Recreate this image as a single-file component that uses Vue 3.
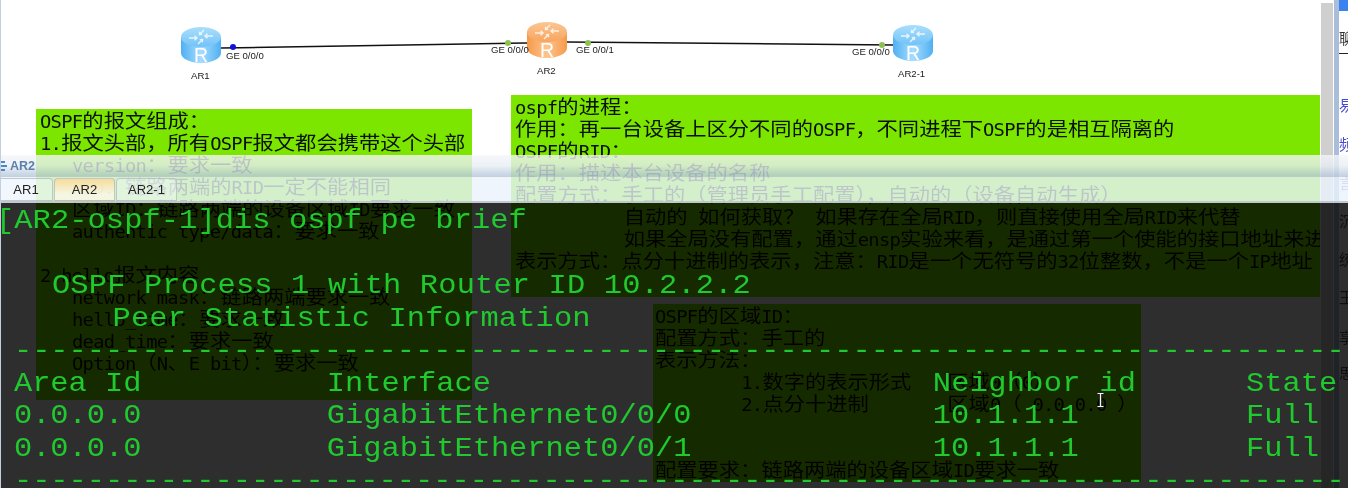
<script setup>
const routers = [
  { id: 'a', x: 181, y: 27, side1: '#4fb0f2', side2: '#a6dcff', top1: '#a9defc', top2: '#72c3f8' },
  { id: 'b', x: 527, y: 22, side1: '#f59a4a', side2: '#fdc48e', top1: '#fcc694', top2: '#f7a55e' },
  { id: 'c', x: 893, y: 25, side1: '#4fb0f2', side2: '#a6dcff', top1: '#a9defc', top2: '#72c3f8' }
]
const links = ['M221 48 L527 43', 'M567 42 L893 45']
const dots = [
  { x: 233, y: 47, c: '#1212d8' },
  { x: 508, y: 43, c: '#8cc152' },
  { x: 588, y: 43, c: '#8cc152' },
  { x: 882, y: 45, c: '#8cc152' }
]
const labels = [
  { x: 226, y: 59, t: 'GE 0/0/0' },
  { x: 491, y: 53, t: 'GE 0/0/0' },
  { x: 576, y: 53, t: 'GE 0/0/1' },
  { x: 852, y: 55, t: 'GE 0/0/0' },
  { x: 191, y: 79, t: 'AR1' },
  { x: 537, y: 74, t: 'AR2' },
  { x: 898, y: 77, t: 'AR2-1' }
]

const runs = (t) => (t.match(/[\x20-\x7e]+|[^\x20-\x7e]+/g) || []).map((s) => ({ s, lat: /^[\x20-\x7e]/.test(s) }))
const build = (arr) => arr.map(([i, t, w, t2]) => ({ i, a: runs(t), w, b: t2 ? runs(t2) : null }))

const note1 = build([
  [0, 'OSPF的报文组成：'],
  [0, '1.报文头部，所有OSPF报文都会携带这个头部'],
  [28.6, 'version：要求一致'],
  [28.6, 'RID：链路两端的RID一定不能相同'],
  [28.6, '区域ID：链路两端的设备区域ID要求一致'],
  [28.6, 'authentic type/data：要求一致'],
  [0, ''],
  [0, '2.hello报文内容'],
  [28.6, 'network mask：链路两端要求一致'],
  [28.6, 'hello_time：要求一致'],
  [28.6, 'dead_time：要求一致'],
  [28.6, 'Option（N、E bit）：要求一致']
])
const note2 = build([
  [0, 'ospf的进程：'],
  [0, '作用：再一台设备上区分不同的OSPF，不同进程下OSPF的是相互隔离的'],
  [0, 'OSPF的RID：'],
  [0, '作用：描述本台设备的名称'],
  [0, '配置方式：手工的（管理员手工配置），自动的（设备自动生成）'],
  [97, '自动的 如何获取？ 如果存在全局RID，则直接使用全局RID来代替'],
  [97, '如果全局没有配置，通过ensp实验来看，是通过第一个使能的接口地址来进'],
  [0, '表示方式：点分十进制的表示，注意：RID是一个无符号的32位整数，不是一个IP地址']
])
const note3 = build([
  [0, 'OSPF的区域ID：'],
  [0, '配置方式：手工的'],
  [0, '表示方法：'],
  [77, '1.数字的表示形式', 184, '区域0（0）'],
  [77, '2.点分十进制', 184, '区域0（ 0.0.0.0 ）'],
  [0, ''],
  [0, ''],
  [0, '配置要求：链路两端的设备区域ID要求一致']
])
const notes = [
  { cls: 'n1', lines: note1 },
  { cls: 'n2', lines: note2 },
  { cls: 'n3', lines: note3 }
]
const panelChars = [
  { y: 29, t: '聊', c: '#333' },
  { y: 96, t: '易', c: '#4a4ad0' },
  { y: 135, t: '频', c: '#4a4ad0' },
  { y: 174, t: '言', c: '#8a8ad0' },
  { y: 212, t: '沉', c: '#555' },
  { y: 250, t: '统', c: '#555' },
  { y: 288, t: '王', c: '#555' },
  { y: 328, t: '享', c: '#555' },
  { y: 364, t: '思', c: '#555' }
]
const dashes = '-'.repeat(74)
const tabs = [
  { t: 'AR1', w: 53 },
  { t: 'AR2', w: 61, on: true },
  { t: 'AR2-1', w: 61 }
]
const rows = [
  ['0.0.0.0', 'GigabitEthernet0/0/0', '10.1.1.1', 'Full'],
  ['0.0.0.0', 'GigabitEthernet0/0/1', '10.1.1.1', 'Full']
]
</script>

<template>
  <div class="stage">
    <svg class="topo" width="1320" height="95" viewBox="0 0 1320 95">
      <defs>
        <template v-for="r in routers" :key="r.id">
          <linearGradient :id="'s' + r.id" x1="0" x2="1" y1="0" y2="0">
            <stop offset="0" :stop-color="r.side1" />
            <stop offset="0.5" :stop-color="r.side2" />
            <stop offset="1" :stop-color="r.side1" />
          </linearGradient>
          <linearGradient :id="'t' + r.id" x1="0" x2="0" y1="0" y2="1">
            <stop offset="0" :stop-color="r.top1" />
            <stop offset="1" :stop-color="r.top2" />
          </linearGradient>
        </template>
      </defs>
      <path v-for="l in links" :key="l" :d="l" stroke="#111" stroke-width="1.5" fill="none" />
      <g v-for="r in routers" :key="r.id" :transform="`translate(${r.x} ${r.y})`">
        <path d="M0 10 V26 A20 10 0 0 0 40 26 V10 Z" :fill="`url(#s${r.id})`" />
        <ellipse cx="20" cy="10" rx="20" ry="10" :fill="`url(#t${r.id})`" />
        <g stroke="#fff" stroke-width="1.4" fill="none" opacity="0.8">
          <path d="M8 11 H16 M13.5 8.8 L16 11 L13.5 13.2" />
          <path d="M32 9 H24 M26.5 6.8 L24 9 L26.5 11.2" />
          <path d="M23 3 L18.5 7.5 M18.6 4.8 L18.5 7.5 L21.2 7.4" />
          <path d="M17 17 L21.5 12.5 M21.4 15.2 L21.5 12.5 L18.8 12.6" />
        </g>
        <text x="20" y="34.5" text-anchor="middle" class="r">R</text>
      </g>
      <circle v-for="d in dots" :key="d.x" :cx="d.x" :cy="d.y" r="3" :fill="d.c" />
      <text v-for="l in labels" :key="l.x" :x="l.x" :y="l.y" class="lbl">{{ l.t }}</text>
    </svg>

    <div v-for="n in notes" :key="n.cls" class="note" :class="n.cls">
      <div class="note-text">
        <div v-for="(ln, i) in n.lines" :key="i" class="nl" :style="{ paddingLeft: ln.i + 'px' }">
          <span class="part" :style="ln.w ? { width: ln.w + 'px' } : null">
            <span v-for="(r, k) in ln.a" :key="k" :class="{ lat: r.lat }">{{ r.s }}</span>
          </span>
          <span v-if="ln.b" class="part">
            <span v-for="(r, k) in ln.b" :key="k" :class="{ lat: r.lat }">{{ r.s }}</span>
          </span>
        </div>
      </div>
    </div>

    <div class="scroll"></div>
    <div class="panel">
      <div class="panel-top"></div>
      <div class="panel-rule"></div>
      <span v-for="c in panelChars" :key="c.y" class="pc" :style="{ top: c.y + 'px', color: c.c }">{{ c.t }}</span>
    </div>

    <div class="win">
      <div class="title">
        <svg width="8" height="14" viewBox="0 0 8 14" class="ticon">
          <path d="M0 3 H5 M0 7 H7 M0 11 H5" stroke="#4d86c2" stroke-width="2" fill="none" />
        </svg>
        <span class="ttext">AR2</span>
      </div>
      <div class="tabs">
        <div v-for="t in tabs" :key="t.t" class="tab" :class="{ on: t.on }" :style="{ width: t.w + 'px' }">{{ t.t }}</div>
      </div>
      <div class="term">
        <div class="term-text">
          <div class="tl cmd">[AR2-ospf-1]dis ospf pe brief</div>
          <div class="tl">&nbsp;</div>
          <div class="tl proc">OSPF Process 1 with Router ID 10.2.2.2</div>
          <div class="tl peer">Peer Statistic Information</div>
          <div class="tl dash">{{ dashes }}</div>
          <div class="tl grid"><span>Area Id</span><span>Interface</span><span class="wide">Neighbor id</span><span>State</span></div>
          <div v-for="(r, i) in rows" :key="i" class="tl grid">
            <span v-for="c in r" :key="c">{{ c }}</span>
          </div>
          <div class="tl dash">{{ dashes }}</div>
        </div>
      </div>
      <svg class="cursor" width="9" height="16" viewBox="0 0 9 16">
        <path d="M1 1 H8 M4.5 1 V15 M1 15 H8" stroke="#222" stroke-width="3" fill="none" />
        <path d="M1.5 1.5 H7.5 M4.5 1.5 V14.5 M1.5 14.5 H7.5" stroke="#f2f2f2" stroke-width="1.2" fill="none" />
      </svg>
    </div>
  </div>
</template>

<style scoped>
.stage {
  position: relative;
  width: 1348px;
  height: 488px;
  overflow: hidden;
  background: #fff;
  border-left: 1px solid #c3cfe0;
  box-sizing: border-box;
  filter: blur(0.5px);
  font-family: "Noto Sans CJK SC", "Liberation Sans", sans-serif;
}
.topo {
  position: absolute;
  left: -1px;
  top: 0;
}
.r {
  font: 19.5px "Liberation Sans", sans-serif;
  fill: #fff;
}
.lbl {
  font: 9.6px "Liberation Sans", sans-serif;
  fill: #222;
}
.note {
  position: absolute;
  background: #7ce600;
  overflow: hidden;
  color: #061000;
}
.n1 {
  left: 35px;
  top: 109px;
  width: 436px;
  height: 291px;
  padding-left: 4px;
  box-sizing: border-box;
}
.n2 {
  left: 510px;
  top: 95px;
  width: 809px;
  height: 202px;
  padding-left: 4px;
  box-sizing: border-box;
}
.n3 {
  left: 652px;
  top: 304px;
  width: 488px;
  height: 178px;
  padding-left: 2px;
  box-sizing: border-box;
}
.note-text {
  transform: scaleX(1.12);
  transform-origin: 0 0;
  white-space: pre;
  font-size: 19px;
}
.nl {
  height: 22px;
  line-height: 22px;
}
.part {
  display: inline-block;
}
.lat {
  font-family: "DejaVu Sans Mono", monospace;
  font-size: 16.8px;
  letter-spacing: -0.65px;
}
.scroll {
  position: absolute;
  left: 1320px;
  top: 3px;
  width: 12px;
  height: 485px;
  background: #cfcfcf;
}
.panel {
  position: absolute;
  left: 1333px;
  top: 0;
  width: 15px;
  height: 488px;
  background: #fff;
  border-left: 5px solid #a9bfd9;
  box-sizing: border-box;
  overflow: hidden;
}
.panel-top {
  height: 11px;
  background: #3b82f0;
}
.panel-rule {
  position: absolute;
  left: 0;
  right: 0;
  top: 53px;
  height: 1px;
  background: #222;
}
.pc {
  position: absolute;
  left: 0;
  font-size: 15px;
  line-height: 18px;
}
.win {
  position: absolute;
  left: -1px;
  top: 155px;
  width: 1348px;
  height: 333px;
  display: flex;
  flex-direction: column;
}
.title {
  height: 22px;
  display: flex;
  align-items: center;
  background: linear-gradient(rgba(244, 246, 248, 0.8), rgba(232, 238, 244, 0.8) 50%, rgba(186, 202, 220, 0.85));
  border-bottom: 1px solid rgba(150, 170, 190, 0.5);
  box-sizing: border-box;
}
.ticon {
  margin-left: 0;
}
.ttext {
  margin-left: 2px;
  font: bold 12.5px "Liberation Sans", sans-serif;
  color: #5c80aa;
}
.tabs {
  height: 26px;
  display: flex;
  align-items: flex-start;
  padding-top: 1px;
  gap: 1px;
  box-sizing: border-box;
  background: rgba(234, 243, 253, 0.8);
  border-bottom: 2px solid rgba(190, 196, 204, 0.9);
}
.tab {
  height: 23px;
  box-sizing: border-box;
  border: 1px solid rgba(170, 180, 190, 0.7);
  border-left: none;
  border-radius: 0 4px 0 0;
  background: rgba(250, 252, 255, 0.35);
  text-align: center;
  font: 13px/22px "Liberation Sans", sans-serif;
  color: #222;
}
.tab + .tab {
  border-left: 1px solid rgba(170, 180, 190, 0.7);
  border-radius: 4px 4px 0 0;
}
.tab.on {
  background: linear-gradient(#f6dc9a, rgba(252, 248, 230, 0.8) 70%);
}
.term {
  flex: 1;
  background: rgba(0, 0, 0, 0.82);
  overflow: hidden;
}
.term-text {
  transform: scaleX(1.085);
  transform-origin: 0 0;
  margin-left: -4px;
  margin-top: 2px;
  width: 1250px;
  font: 28px/32.5px "Liberation Mono", monospace;
  color: #20c92e;
  white-space: pre;
}
.tl {
  height: 32.5px;
}
.cmd {
  letter-spacing: 0.07px;
}
.proc {
  padding-left: 51.6px;
  letter-spacing: 0.15px;
}
.peer {
  padding-left: 107.4px;
  letter-spacing: 0.15px;
}
.dash {
  padding-left: 16.5px;
  overflow: hidden;
}
.grid {
  display: grid;
  grid-template-columns: 288.4px 558.5px 288.8px auto;
  padding-left: 16.5px;
}
.wide {
  letter-spacing: 0.25px;
}
.cursor {
  position: absolute;
  left: 1096px;
  top: 237px;
}
</style>

<style>
html, body {
  margin: 0;
  background: #fff;
}
</style>
